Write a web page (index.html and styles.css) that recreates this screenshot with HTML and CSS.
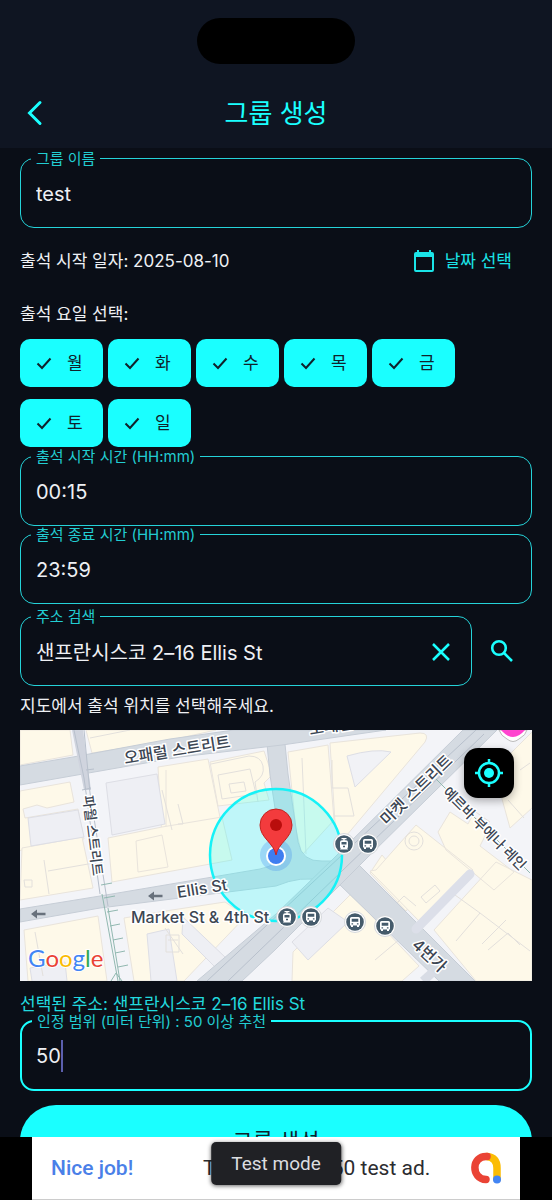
FILE: index.html
```html
<!DOCTYPE html>
<html lang="ko">
<head>
<meta charset="utf-8">
<meta name="viewport" content="width=device-width, initial-scale=1">
<title>그룹 생성</title>
<link rel="stylesheet" href="styles.css">
</head>
<body>
<div class="screen">
  <header class="header">
    <div class="status"><div class="island"></div></div>
    <div class="titlebar">
      <button class="back" type="button" aria-label="뒤로">
        <svg width="24" height="28" viewBox="0 0 24 28"><path d="M16 3.500 5.500 14 16 24.500" fill="none" stroke="currentColor" stroke-width="3" stroke-linecap="round"/></svg>
      </button>
      <h1 class="title">그룹 생성</h1>
    </div>
  </header>

  <main class="content">
    <fieldset class="field">
      <legend><label for="name">그룹 이름</label></legend>
      <div class="row"><input id="name" type="text" value="test"></div>
    </fieldset>

    <div class="date-row">
      <span>출석 시작 일자: 2025-08-10</span>
      <button class="date-button" type="button">
        <svg width="22" height="24" viewBox="0 0 22 24"><path fill="currentColor" d="M4 1h2v2h10V1h2v2h1a2 2 0 0 1 2 2v16a2 2 0 0 1-2 2H3a2 2 0 0 1-2-2V5a2 2 0 0 1 2-2h1zM3 8v13h16V8z"/></svg>
        날짜 선택
      </button>
    </div>

    <p class="days-title">출석 요일 선택:</p>
    <div class="chips">
      <label class="chip"><input type="checkbox" checked><svg viewBox="0 0 16 14"><path d="M1.500 7.500 6 12 14.500 2.500"/></svg><span>월</span></label>
      <label class="chip"><input type="checkbox" checked><svg viewBox="0 0 16 14"><path d="M1.500 7.500 6 12 14.500 2.500"/></svg><span>화</span></label>
      <label class="chip"><input type="checkbox" checked><svg viewBox="0 0 16 14"><path d="M1.500 7.500 6 12 14.500 2.500"/></svg><span>수</span></label>
      <label class="chip"><input type="checkbox" checked><svg viewBox="0 0 16 14"><path d="M1.500 7.500 6 12 14.500 2.500"/></svg><span>목</span></label>
      <label class="chip"><input type="checkbox" checked><svg viewBox="0 0 16 14"><path d="M1.500 7.500 6 12 14.500 2.500"/></svg><span>금</span></label>
      <label class="chip"><input type="checkbox" checked><svg viewBox="0 0 16 14"><path d="M1.500 7.500 6 12 14.500 2.500"/></svg><span>토</span></label>
      <label class="chip"><input type="checkbox" checked><svg viewBox="0 0 16 14"><path d="M1.500 7.500 6 12 14.500 2.500"/></svg><span>일</span></label>
    </div>

    <fieldset class="field">
      <legend><label for="start">출석 시작 시간 (HH:mm)</label></legend>
      <div class="row"><input id="start" type="text" value="00:15"></div>
    </fieldset>
    <fieldset class="field">
      <legend><label for="end">출석 종료 시간 (HH:mm)</label></legend>
      <div class="row"><input id="end" type="text" value="23:59"></div>
    </fieldset>

    <div class="search-row">
      <fieldset class="field">
        <legend><label for="address">주소 검색</label></legend>
        <div class="row">
          <input id="address" type="text" value="샌프란시스코 2–16 Ellis St">
          <button class="icon-button" type="button" aria-label="지우기">
            <svg width="20" height="20" viewBox="0 0 20 20"><path d="m2 2 16 16M18 2 2 18" fill="none" stroke="currentColor" stroke-width="2.500"/></svg>
          </button>
        </div>
      </fieldset>
      <button class="icon-button search" type="button" aria-label="검색">
        <svg width="24" height="24" viewBox="0 0 24 24" fill="none" stroke="currentColor" stroke-width="2.600"><circle cx="9" cy="9" r="6.800"/><path d="m14 14 8 8"/></svg>
      </button>
    </div>

    <p class="hint">지도에서 출석 위치를 선택해주세요.</p>

    <div class="map">
      <svg class="map-canvas" viewBox="0 0 512 251" preserveAspectRatio="xMidYMid slice">
        <defs>
          <g id="stop"><circle r="10.500" fill="#fff" stroke="#d5d8dc" stroke-width="1"/><circle r="8.800" fill="#455b6b"/></g>
          <g id="bus"><use href="#stop"/><path fill="#fff" fill-rule="evenodd" d="M-3.500-5h7q1.500 0 1.500 1.500V3.500H4V5H2V3.500h-4V5h-2V3.500h-1v-7Q-5-5-3.500-5zM-3.300-3.300v3.100h6.600v-3.100zM-3.500 1.200v1.300h1.600V1.200zM1.900 1.200v1.300h1.600V1.200z"/></g>
          <g id="tram"><use href="#stop"/><path fill="#fff" fill-rule="evenodd" d="M-2.500-6h5v1.200H.7v1H2q2 0 2 2V3q0 .8-.8 1L4 5.500H-4L-3.200 4Q-4 3.800-4 3v-4.800q0-2 2-2h1.300v-1h-1.800zM-2.500-2v2.500h5V-2zM-1 1.700v1.500h2V1.700z"/></g>
          <path id="arrow" fill="#68717c" d="M-7 0-1-4.500v3.300h8.500v2.400H-1v3.300z"/>
        </defs>
        <rect width="512" height="251" fill="#f3f4f8"/>

        <g fill="#fef9e9" stroke="#e9e4dc" stroke-width="1">
          <path d="M0 0h50l3 25-53 10zM66 0h130l-54 12-70 11zM0 61l50-9 4 20-27 6-10-3-14 4 2 9 53-9 6 30-67 12z"/>
          <path d="M138 37 188 29 202 97 142 108zM146 40v66M190 32l54-11 8 24-8 8 5 17-51 6z"/>
          <path d="M88 108 142 97 202 87 212 130 92 152zM116 111l26-6 6 32-30 5zM2 118l60-11 11 51-73 12z"/>
          <path d="M268 22 308 15 314 90 282 125 276 100zM310 13l90-10q10 0 5 9l-84 100-6-20zM372 137l18-22 16 2 8 16-10 26-18 22-36-38 12-18z"/>
          <path d="M4 200l74-14 9 65H8zM104 188 152 180 205 172 226 186 164 251H114zM273 222l58-58 68 72-17 15H272zM356 140l40-45 57 45-52 53-51-52zM414 200l62-68 36 18v101h-56zM418 102l12-20 18 12 4-8 18 10-10 20 34 26-20 18-48-40zM474 40l38-38v76l-22 20z"/>
        </g>
        <g fill="#eeeff4" stroke="#dddee5" stroke-width="1">
          <path d="M86 53l51-9 8 50-53 11zM8 88l50-8 6 27-53 9zM127 204l22-5 8 52h-26zM10 238l35-6 2 19H12zM163 187l43 41-8 12-36-36zM308 178l20 14-40 38-16-18z"/>
          <path d="M327 26q28-8 44-4l-36 35z" fill="#f1f2f6"/>
        </g>
        <g fill="none" stroke="#e3e0dc" stroke-width="1">
          <path d="M15 202l8 44M70 8l40-8M24 130l5 34M28 141l46-8M4 150h8v7H5zM142 60l10 40M158 74l5 20h-5M191 34l38-8q12 0 14 10t-8 16l3 20M198 45l32-6 6 25-34 5zM209 54l15-2 2 9-15 2zM282 28l4 96M312 30v28h16l6 28h-20M145 198l18 26M146 205h13v17h-13zM148 210h10M436 211l24-28 50 38M460 183l-25-18M462 214l24-24M346 100l12 10-4 10-14-9z"/>
          <circle cx="394" cy="111" r="9"/><circle cx="394" cy="111" r="5"/><path d="m362 188 22-22 12 10M401 167l14-12 5 6-14 12zM355 230l25-21 16 20M450 78l20 14M488 70l16 18M500 40l10-7M468 220l20-17 12 12"/>
        </g>

        <g fill="#d5dbe2" stroke="#c6cdd6" stroke-width="1">
          <path d="M247 14h18l3 30 10 68q4 20 24 19h14l-14 20q-20-6-46 5L80 178 0 192v-13l80-13 160-27q18-4 22-14L250 45z"/>
          <path d="M0 36l53-9 97-18L214 0h152L262 15 160 27 80 41 0 55z"/>
          <path d="M319 154l19-20 117 117h-36z"/>
          <path d="M177 251 256 184 313 129 443 0h34L346 129 256 219 222 251z"/>
        </g>
        <path d="M396 199 450 144" stroke="#dcdfe9" stroke-width="9" stroke-linecap="round"/>
        <path d="m403 251 10-9" stroke="#d8dce5" stroke-width="9"/>
        <path d="M52 0h11l8 60h-7z" fill="#d0d4de"/>
        <g fill="none" stroke="#b8c0cc" stroke-width="1">
          <path d="M187 251 456 0M208 251 464 4M64 0l6 63 18 113M54 0l10 48 16 116M62 60l9-2M66 40l8-1"/>
        </g>
        <path d="M82 164 98 251M88 178l12 73M91 251l5-8 6 8M81 155l11-2M84 168l11-2M87 182l11-2M90 196l10-2M93 210l10-2M95 223l10-2M98 237l10-2M416 49l94 94" fill="none" stroke="#91b8b0" stroke-width="1"/>
        <use href="#arrow" x="18" y="184"/><use href="#arrow" x="135" y="166"/>

        <circle cx="256" cy="125" r="66" fill="#1affff" fill-opacity=".24" stroke="#16f2f7" stroke-width="2.500"/>

        <g class="map-text">
          <text transform="translate(105 34) rotate(-9)" font-size="16">오패럴 스트리트</text>
          <text transform="translate(290 5) rotate(-9)" font-size="16">오패럴 스트리트</text>
          <text transform="translate(367 96) rotate(-44)" font-size="16">마켓 스트리트</text>
          <text transform="translate(63 66) rotate(83)" font-size="14">파월 스트리트</text>
          <text transform="translate(422 63) rotate(45)" font-size="14">예르바 부에나 레인</text>
          <text transform="translate(391 216) rotate(43)" font-size="16">4번가</text>
          <text transform="translate(158 168) rotate(-9)" font-size="16">Ellis St</text>
          <text x="111" y="193" font-size="16">Market St &amp; 4th St</text>
        </g>
        <use href="#tram" x="324" y="114"/><use href="#bus" x="348" y="114"/>
        <use href="#tram" x="267" y="187"/><use href="#bus" x="291" y="187"/>
        <use href="#bus" x="335" y="192"/><use href="#bus" x="365" y="196"/>

        <circle cx="256" cy="125" r="16" fill="#2f7df0" fill-opacity=".25"/>
        <circle cx="256" cy="126" r="10" fill="#fff"/><circle cx="256" cy="126" r="8" fill="#3f7df0"/>
        <path d="M256 125c-2-12-16-17-16-30a16 16 0 0 1 32 0c0 13-14 18-16 30z" fill="#f33b3d" stroke="#c5221f" stroke-width="1"/>
        <circle cx="256" cy="95" r="6" fill="#b90d0c"/>
        <path d="M479 0q2 6 8 9 6 5 12 0 7-4 8-9z" fill="#fff" stroke="#bbb" stroke-width="1"/><path d="M481 0q12 14 24 0z" fill="#ff45cf"/>
        <text class="google" x="8" y="237"><tspan fill="#4285f4">G</tspan><tspan fill="#ea4335">o</tspan><tspan fill="#fbbc04">o</tspan><tspan fill="#4285f4">g</tspan><tspan fill="#34a853">l</tspan><tspan fill="#ea4335">e</tspan></text>
      </svg>
      <button class="locate" type="button" aria-label="현재 위치">
        <svg width="30" height="30" viewBox="0 0 30 30" fill="none" stroke="currentColor" stroke-width="2.500"><circle cx="15" cy="15" r="10"/><circle cx="15" cy="15" r="5" fill="currentColor" stroke="none"/><path d="M15 1v4M15 25v4M1 15h4M25 15h4"/></svg>
      </button>
    </div>

    <p class="selected">선택된 주소: 샌프란시스코 2–16 Ellis St</p>

    <fieldset class="field focused">
      <legend><label for="range">인정 범위 (미터 단위) : 50 이상 추천</label></legend>
      <div class="row"><input id="range" type="text" value="50"><span class="caret"></span></div>
    </fieldset>

    <button class="submit" type="submit">그룹 생성</button>
  </main>

  <footer class="ad-bar">
    <div class="ad">
      <span class="ad-praise">Nice job!</span>
      <span class="ad-text">This is a 320x50 test ad.</span>
      <svg width="32" height="34" viewBox="0 0 32 34" fill="none" stroke-width="7.500" stroke-linecap="round"><path d="M17 5.500q10 1 10 11.500v11" stroke="#fbbc04"/><path d="M17 5.500C1 4.500 1 28 16 28.500" stroke="#ea4335"/><circle cx="27" cy="28.500" r="4" fill="#4285f4"/></svg>
      <span class="test-mode">Test mode</span>
    </div>
  </footer>
</div>
</body>
</html>
```
FILE: styles.css
```css
* {
  box-sizing: border-box;
}

body {
  margin: 0;
  background: #000;
  color: #eef0f4;
  font: 17px/24px Inter, "Noto Sans CJK KR", sans-serif;
}

button,
input {
  margin: 0;
  padding: 0;
  border: 0;
  background: none;
  color: inherit;
  font: inherit;
}

p {
  margin: 0;
}

svg {
  display: block;
  flex: none;
}

.screen {
  display: flex;
  flex-direction: column;
  height: 100vh;
  background: #0a0e17;
}

.header {
  flex: none;
  background: #0f1522;
  color: #1affff;
}

.status {
  display: flex;
  justify-content: center;
  padding: 18px 0 14px;
}

.island {
  width: 158px;
  height: 46px;
  border-radius: 23px;
  background: #000;
}

.titlebar {
  display: grid;
  grid-template-columns: 48px 1fr 48px;
  align-items: center;
  height: 70px;
  padding: 0 12px;
}

.back {
  display: flex;
  justify-content: center;
}

.title {
  margin: 0;
  padding-top: 2px;
  font-size: 26px;
  line-height: 36px;
  font-weight: 400;
  text-align: center;
}

.content {
  flex: 1;
  min-height: 0;
  overflow: hidden;
  padding: 2px 20px 0;
}

.field {
  min-width: 0;
  margin: 0;
  padding: 0;
  border: 1px solid #25d3d9;
  border-radius: 14px;
}

.field legend {
  height: 16px;
  margin-left: 10px;
  padding: 0 5px;
  color: #22cdd2;
  font-size: 15px;
  line-height: 18px;
}

.field .row {
  display: flex;
  align-items: center;
  height: 61px;
  padding: 0 15px 6px;
}

.field input {
  flex: 1;
  min-width: 0;
  height: 32px;
  font-size: 20px;
  outline: none;
}

.field.focused {
  border: 2px solid #1affff;
}

.field.focused .row {
  height: 60px;
  padding: 0 14px 6px;
}

.field.focused input {
  flex: none;
  field-sizing: content;
}

.caret {
  width: 2px;
  height: 32px;
  background: #5b5fae;
}

.date-row {
  display: flex;
  align-items: center;
  justify-content: space-between;
  height: 57px;
  padding: 9px 20px 0 0;
}

.date-button {
  display: flex;
  align-items: center;
  gap: 10px;
  height: 48px;
  color: #1ae4e8;
}

.days-title {
  margin: 17px 0 13px;
}

.chips {
  display: flex;
  flex-wrap: wrap;
  gap: 12px 5px;
  margin-bottom: 1px;
}

.chip {
  position: relative;
  display: flex;
  align-items: center;
  gap: 15px;
  width: 83px;
  height: 48px;
  padding-left: 16px;
  border-radius: 10px;
  background: #1affff;
  color: #10222b;
}

.chip input {
  position: absolute;
  inset: 0;
  opacity: 0;
}

.chip svg {
  width: 16px;
  height: 14px;
  fill: none;
  stroke: currentColor;
  stroke-width: 2;
}

.search-row {
  display: flex;
  align-items: center;
  margin-top: 4px;
}

.search-row .field {
  flex: 1;
}

.icon-button {
  display: flex;
  align-items: center;
  justify-content: center;
  width: 30px;
  height: 30px;
  color: #1affff;
}

.icon-button.search {
  width: 60px;
  height: 48px;
  margin-top: 8px;
}

.hint {
  margin: 8px 0 12px;
}

.map {
  position: relative;
}

.map-canvas {
  width: 100%;
  height: auto;
}

.map-text {
  fill: #3c4653;
  stroke: #fff;
  stroke-width: 3px;
  stroke-linejoin: round;
  paint-order: stroke;
  font-weight: 500;
}

.google {
  font-family: Lato, sans-serif;
  font-size: 24px;
  stroke: #fff;
  stroke-width: 2px;
  paint-order: stroke;
}

.locate {
  position: absolute;
  top: 18px;
  right: 18px;
  display: flex;
  align-items: center;
  justify-content: center;
  width: 50px;
  height: 50px;
  border-radius: 14px;
  background: #000;
  color: #1affff;
  box-shadow: 0 3px 8px rgba(0, 0, 0, 0.3);
}

.selected {
  margin-top: 11px;
  margin-bottom: -3px;
  color: #22d9de;
}

.submit {
  display: block;
  width: 100%;
  height: 72px;
  margin-top: 14px;
  border-radius: 36px;
  background: #1affff;
  color: #10222b;
  font-size: 22px;
  line-height: 32px;
}

.ad-bar {
  flex: none;
  display: flex;
  justify-content: center;
  padding: 0 32px;
  background: #000;
}

.ad {
  position: relative;
  flex: 1;
  display: flex;
  align-items: center;
  justify-content: space-between;
  height: 63px;
  padding: 0 18px 0 19px;
  border-bottom: 1px solid #ccc;
  background: #fff;
  color: #2b2c2f;
  font-family: Roboto, sans-serif;
  font-size: 21px;
}

.ad-praise {
  color: #4a80e8;
  font-weight: 500;
}

.ad-text {
  margin-left: 30px;
}

.test-mode {
  position: absolute;
  top: 5px;
  left: 50%;
  transform: translateX(-50%);
  padding: 10px 20px;
  border-radius: 5px;
  background: #202125;
  color: #dcdde0;
  font-size: 19px;
  line-height: 23px;
  white-space: nowrap;
  box-shadow: 0 1px 4px rgba(0, 0, 0, 0.6);
}
```
